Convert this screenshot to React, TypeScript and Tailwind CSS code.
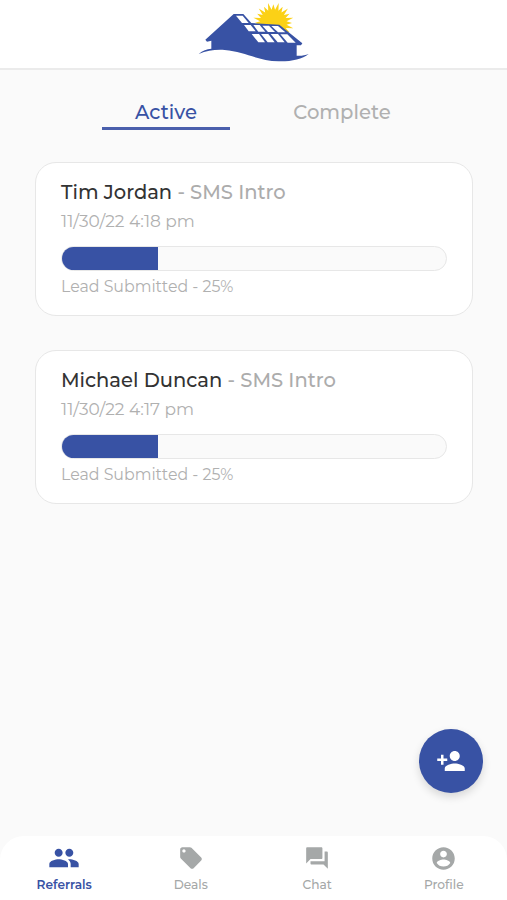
import type { ReactNode } from "react";
import { MdForum, MdLocalOffer, MdPeople, MdPersonAdd } from "react-icons/md";

type Referral = {
  name: string;
  source: string;
  date: string;
  status: string;
  percent: number;
};

const REFERRALS: Referral[] = [
  {
    name: "Tim Jordan",
    source: "SMS Intro",
    date: "11/30/22 4:18 pm",
    status: "Lead Submitted",
    percent: 25,
  },
  {
    name: "Michael Duncan",
    source: "SMS Intro",
    date: "11/30/22 4:17 pm",
    status: "Lead Submitted",
    percent: 25,
  },
];

// 24 rays around the sun, alternating long and short
const SUN_RAYS = Array.from({ length: 48 }, (_, i) => {
  const angle = (i * Math.PI) / 24 + Math.PI / 2;
  const r = i % 2 ? 40 : i % 4 ? 62 : 56;
  return `${250 + r * Math.cos(angle)},${69 + r * Math.sin(angle)}`;
}).join(" ");

function Logo() {
  return (
    <svg viewBox="0 0 390 204" className="h-[68px] w-[130px]" aria-label="Solar home">
      <polygon points={SUN_RAYS} fill="#fbd116" />
      <path
        d="M46 119 L131 42 H160 L184 69 L268 74 L337 130 L333 136 H320 V167 C334 168 345 166 356 162 C337 178 302 185 266 184 C202 182 164 155 104 150 C76 148 52 152 26 162 C38 151 50 147 64 146 V122 L51 125 Z"
        fill="#3852a4"
      />
      <g fill="#fff">
        <path d="M138 47h20l18 22h-20z" />
        <path d="M162 75h20l15 19h-21z" />
        <path d="M190 75h19l17 20h-21z" />
        <path d="M217 77h20l18 19h-21z" />
        <path d="M244 78h20l22 19h-22z" />
        <path d="M185 102h22l18 25h-20z" />
        <path d="M213 102h22l19 25h-21z" />
        <path d="M242 102h22l20 25h-21z" />
        <path d="M271 103h21l25 25h-24z" />
      </g>
    </svg>
  );
}

function ProfileIcon() {
  return (
    <svg viewBox="0 0 24 24" fill="currentColor" className="size-[27px]">
      <path d="M12 2C6.48 2 2 6.48 2 12s4.48 10 10 10 10-4.48 10-10S17.52 2 12 2zm0 3c1.66 0 3 1.34 3 3s-1.34 3-3 3-3-1.34-3-3 1.34-3 3-3zm0 14.2c-2.5 0-4.71-1.28-6-3.22.03-1.99 4-3.08 6-3.08 1.99 0 5.97 1.09 6 3.08-1.29 1.94-3.5 3.22-6 3.22z" />
    </svg>
  );
}

function ReferralCard({ referral }: { referral: Referral }) {
  return (
    <article className="h-[154px] rounded-[21px] border-[1.5px] border-[#e7e7e7] bg-white px-[25px] pt-[15px]">
      <h2 className="text-[19.5px] leading-7 font-medium whitespace-nowrap text-[#333]">
        {referral.name}
        <span className="text-[#acacac]"> - {referral.source}</span>
      </h2>
      <p className="mt-[2px] text-[17px] leading-[26px] text-[#b0b0b0]">
        {referral.date}
      </p>
      <div className="mt-3 h-[25px] overflow-hidden rounded-full border-[1.5px] border-[#e7e7e7] bg-[#fafafa]">
        <div
          className="h-full bg-[#3852a4]"
          style={{ width: `${referral.percent}%` }}
        />
      </div>
      <p className="mt-1 text-[15.8px] leading-6 text-[#b0b0b0]">
        {referral.status} - {referral.percent}%
      </p>
    </article>
  );
}

function NavItem({
  icon,
  label,
  active = false,
}: {
  icon: ReactNode;
  label: string;
  active?: boolean;
}) {
  return (
    <button
      className={`flex w-[126.5px] flex-col items-center ${
        active ? "font-semibold text-[#3852a4]" : "font-medium text-[#a5a8a8]"
      }`}
    >
      <span className="flex h-8 items-center">{icon}</span>
      <span className="mt-px text-[12.2px] leading-5">{label}</span>
    </button>
  );
}

export default function App() {
  return (
    <div className="flex h-[900px] w-[507px] flex-col overflow-hidden bg-[#fafafa] font-['Montserrat','Inter',sans-serif]">
      <header className="flex h-[70px] shrink-0 justify-center border-b-2 border-[#ebebeb] bg-white pl-[3px]">
        <Logo />
      </header>

      <div className="mt-[26px] flex justify-center gap-[48px] pl-px text-[19.6px] leading-8 font-medium">
        <button className="flex h-[34px] w-32 justify-center border-b-[3px] border-[#4a5fac] text-[#3852a4]">
          Active
        </button>
        <button className="flex h-[34px] w-32 justify-center text-[#b0b0b0]">
          Complete
        </button>
      </div>

      <main className="mt-8 flex flex-col gap-[34px] pr-[34px] pl-[35px]">
        {REFERRALS.map((referral) => (
          <ReferralCard key={referral.name} referral={referral} />
        ))}
      </main>

      <div className="mt-auto mb-[43px] flex justify-end pr-6">
        <button
          aria-label="Add referral"
          className="flex size-16 items-center justify-center rounded-full bg-[#3852a4] text-white shadow-[0_4px_8px_rgba(0,0,0,0.14)]"
        >
          <MdPersonAdd size={30} />
        </button>
      </div>

      <nav className="flex h-16 shrink-0 rounded-t-[24px] bg-white pt-[6px] pl-px">
        <NavItem icon={<MdPeople size={32} />} label="Referrals" active />
        <NavItem icon={<MdLocalOffer size={26} />} label="Deals" />
        <NavItem icon={<MdForum size={26} />} label="Chat" />
        <NavItem icon={<ProfileIcon />} label="Profile" />
      </nav>
    </div>
  );
}
